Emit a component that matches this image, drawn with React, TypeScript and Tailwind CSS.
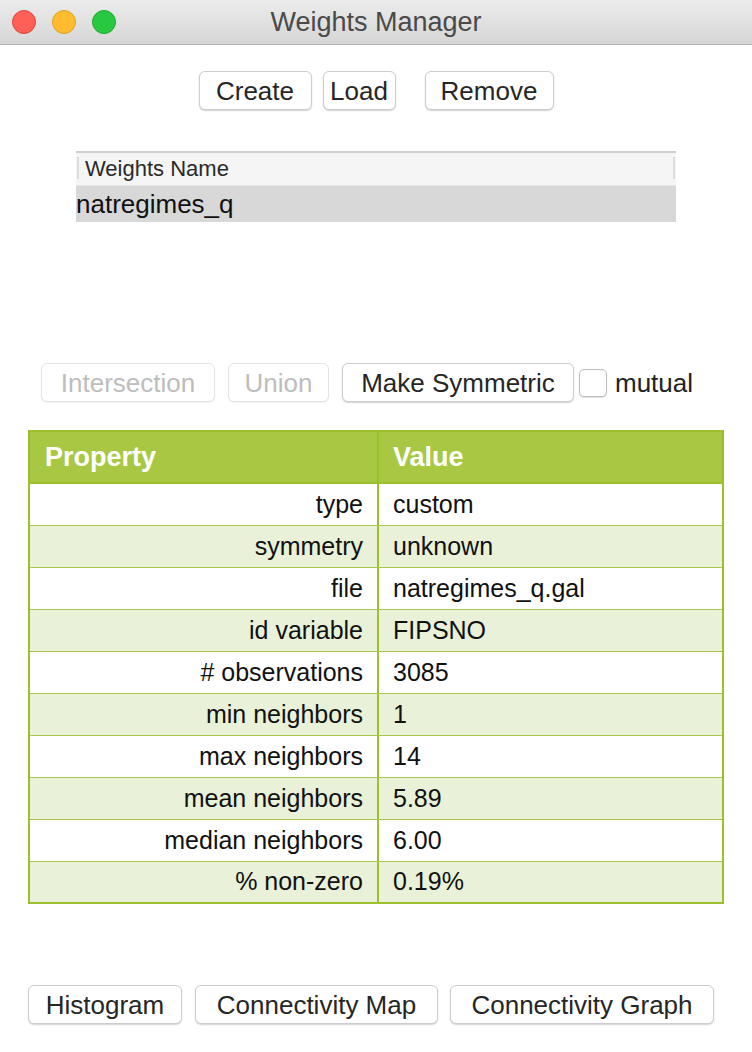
import React from "react";

const rows: [string, string][] = [
  ["type", "custom"],
  ["symmetry", "unknown"],
  ["file", "natregimes_q.gal"],
  ["id variable", "FIPSNO"],
  ["# observations", "3085"],
  ["min neighbors", "1"],
  ["max neighbors", "14"],
  ["mean neighbors", "5.89"],
  ["median neighbors", "6.00"],
  ["% non-zero", "0.19%"],
];

function Btn({ children, className = "", disabled = false }: { children: React.ReactNode; className?: string; disabled?: boolean }) {
  return (
    <div
      className={
        "flex items-center justify-center h-[39px] rounded-[6px] bg-white border text-[26px] leading-none whitespace-nowrap " +
        (disabled
          ? "border-[#e3e3e3] text-[#bdbdbd] shadow-[0_1px_1px_rgba(0,0,0,0.06)] "
          : "border-[#cdcdcd] text-[#262626] shadow-[0_1px_1.5px_rgba(0,0,0,0.18)] ") +
        className
      }
    >
      {children}
    </div>
  );
}

export default function App() {
  return (
    <div className="w-[752px] h-[1052px] bg-white flex flex-col overflow-hidden" style={{ fontFamily: '"Liberation Sans", Arial, sans-serif' }}>
      {/* title bar */}
      <div className="relative h-[45px] shrink-0 bg-gradient-to-b from-[#ececec] to-[#d6d6d6] border-b border-[#b3b3b3] flex items-center justify-center">
        <div className="absolute left-[12px] top-[10px] flex gap-[16px]">
          <div className="w-[24px] h-[24px] rounded-full bg-[#fe5f57] border border-[#e0443e]" />
          <div className="w-[24px] h-[24px] rounded-full bg-[#febc2e] border border-[#dea123]" />
          <div className="w-[24px] h-[24px] rounded-full bg-[#28c840] border border-[#1aab29]" />
        </div>
        <span className="text-[27px] text-[#4a4a4a] leading-none">Weights Manager</span>
      </div>

      {/* top buttons */}
      <div className="flex justify-center mt-[26px]">
        <Btn className="w-[113px]">Create</Btn>
        <Btn className="w-[73px] ml-[11px]">Load</Btn>
        <Btn className="w-[129px] ml-[29px]">Remove</Btn>
      </div>

      {/* list */}
      <div className="ml-[76px] w-[600px] mt-[41px]">
        <div className="h-[34px] bg-[#f5f5f5] border-t-[2px] border-[#d0d0d0] flex items-center relative">
          <div className="absolute left-[1px] top-[4px] w-[2px] h-[22px] bg-[#dddddd]" />
          <div className="absolute right-[1px] top-[4px] w-[2px] h-[22px] bg-[#dddddd]" />
          <span className="ml-[9px] text-[22px] text-[#2a2a2a] leading-none">Weights Name</span>
        </div>
        <div className="h-[37px] bg-[#d8d8d8] flex items-center border-t border-[#e6e6e6]">
          <span className="text-[26px] text-[#111] leading-none">natregimes_q</span>
        </div>
      </div>

      {/* second button row */}
      <div className="flex items-center ml-[41px] mt-[141px]">
        <Btn disabled className="w-[174px]">Intersection</Btn>
        <Btn disabled className="w-[101px] ml-[13px]">Union</Btn>
        <Btn className="w-[232px] ml-[13px]">Make Symmetric</Btn>
        <div className="w-[28px] h-[28px] ml-[5px] rounded-[5px] border border-[#bdbdbd] bg-white shadow-[0_1px_1px_rgba(0,0,0,0.12)]" />
        <span className="ml-[8px] text-[26px] text-[#222] leading-none">mutual</span>
      </div>

      {/* table */}
      <div className="ml-[28px] w-[696px] mt-[28px] border-[2px] border-[#9cc02b]">
        <div className="flex h-[52px] bg-[#a8c843] border-b-[2px] border-[#9cc02b] text-white font-bold text-[27px]">
          <div className="w-[349px] border-r-[2px] border-[#9cc02b] flex items-center pl-[15px]">Property</div>
          <div className="flex-1 flex items-center pl-[14px]">Value</div>
        </div>
        {rows.map(([k, v], i) => (
          <div
            key={k}
            className={
              "flex text-[25px] text-[#111] whitespace-nowrap " +
              (i < rows.length - 1 ? "h-[42px] border-b border-[#a9c94a] " : "h-[40px] ") +
              (i % 2 === 0 ? "bg-white" : "bg-[#e9f1d8]")
            }
          >
            <div className="w-[349px] border-r-[2px] border-[#9cc02b] flex items-center justify-end pr-[14px]">{k}</div>
            <div className="flex-1 flex items-center pl-[14px]">{v}</div>
          </div>
        ))}
      </div>

      {/* bottom buttons */}
      <div className="flex items-center ml-[28px] mt-[81px]">
        <Btn className="w-[154px]">Histogram</Btn>
        <Btn className="w-[243px] ml-[13px]">Connectivity Map</Btn>
        <Btn className="w-[264px] ml-[12px]">Connectivity Graph</Btn>
      </div>
    </div>
  );
}
